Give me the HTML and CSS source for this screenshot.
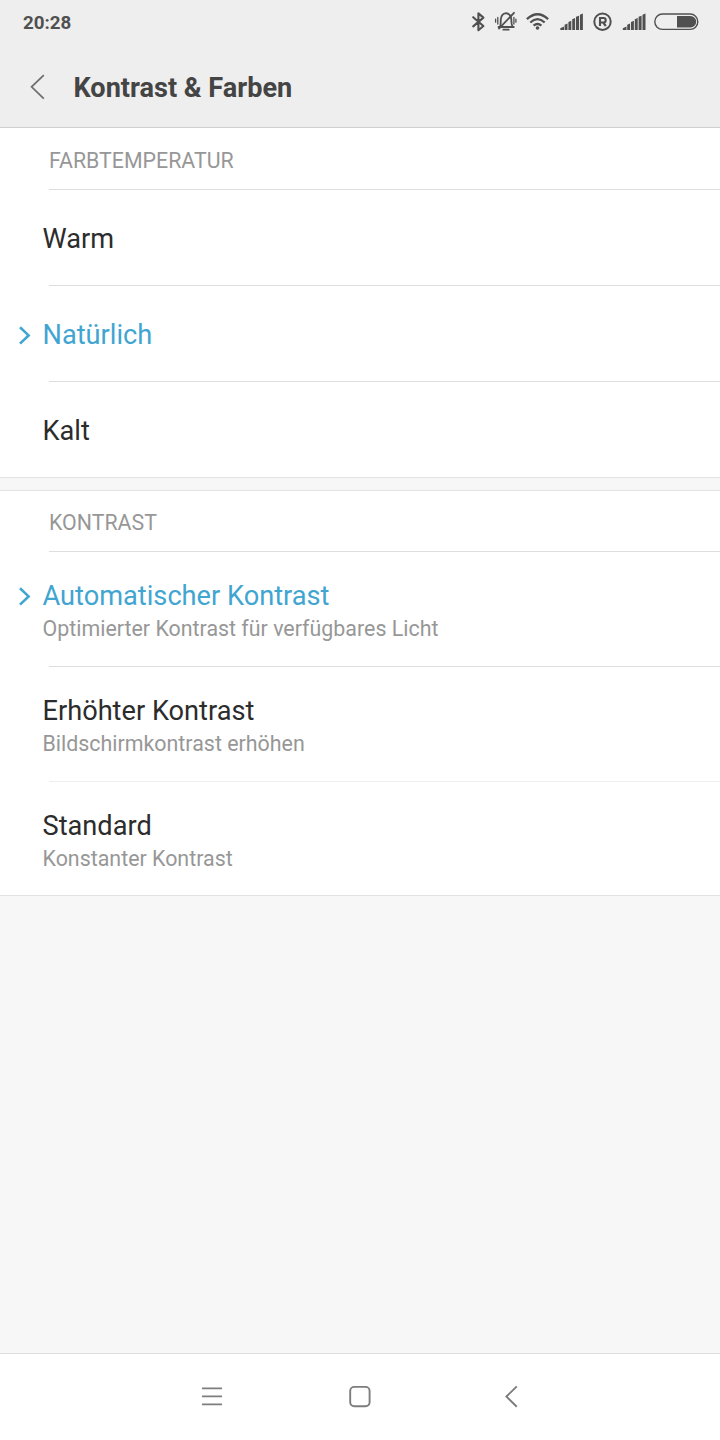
FILE: index.html
```html
<!DOCTYPE html>
<html lang="de">
<head>
<meta charset="utf-8">
<title>Kontrast &amp; Farben</title>
<link rel="stylesheet" href="styles.css">
</head>
<body>
<div class="screen">
  <header class="header">
    <div class="status">
      <span class="clock">20:28</span>
      <svg class="status-icons" width="230" height="28" viewBox="470 8 230 28" fill="none" stroke="#505050" stroke-linecap="round" stroke-linejoin="round">
        <path stroke-width="2.1" d="M473.2 17.2 483.4 26 478.4 30.2V13.4L483.4 17.6 473.2 26.4"/>
        <g stroke-width="1.8">
          <path d="M498.5 27H513.8M500.2 26.4C501 24.2 500.6 22.6 500.8 19.2 501.2 15.8 503 13.6 506 13.2 509.2 13.6 511 15.8 511.3 19.2 511.4 22.6 511.3 24.4 512.4 26.4"/>
          <path d="M503.3 29.7H508.7M514 12.8 499 28.6"/>
          <path stroke-width="1.3" d="M497.8 17.4V24M495.6 19.2V22.2M513.9 17.4V24M515.9 19.2V22.2"/>
        </g>
        <g stroke-width="2.3" stroke-linecap="butt">
          <path d="M526.9 19.2Q537.5 9.2 548.1 19.2M530.3 22.5Q537.5 15.8 544.7 22.5M533.6 25.7Q537.5 22.3 541.4 25.7"/>
        </g>
        <circle cx="537.5" cy="28" r="1.8" fill="#505050" stroke="none"/>
        <path fill="#505050" stroke="none" d="M560.3 30V28.2L564 26.6V30ZM564.6 30V24.7L567.5 23.5V30ZM568.4 30V22L571.3 20.8V30ZM572.2 30V19.3L575.1 18.1V30ZM576 30V16.8L579 15.7V30ZM579.9 30V14.7L582.9 13.6V30Z"/>
        <circle cx="602.5" cy="21.7" r="8.2" stroke-width="2"/>
        <path stroke-width="2.1" stroke-linecap="butt" stroke-linejoin="miter" d="M600 26V18H603.4C606.5 18 606.5 22.5 603.4 22.5H600M603.2 22.5 605.8 26"/>
        <path fill="#505050" stroke="none" d="M622.8 30V28.2L626.5 26.6V30ZM627.2 30V24.7L630.1 23.5V30ZM631 30V22L633.9 20.8V30ZM634.8 30V19.3L637.7 18.1V30ZM638.6 30V16.8L641.6 15.7V30ZM642.5 30V14.7L645.5 13.6V30Z"/>
        <rect x="654.8" y="14" width="43" height="15.4" rx="7.7" stroke-width="1.4"/>
        <path fill="#505050" stroke="none" d="M677 16H690.5A5.7 5.7 0 0 1 690.5 27.4H677Z"/>
      </svg>
    </div>
    <div class="titlebar">
      <svg class="back" width="18" height="28" viewBox="0 0 18 28" fill="none" stroke="#707070" stroke-width="1.8"><path d="M15.8 2.1 3.6 13.8 15.8 25.6"/></svg>
      <h1 class="title">Kontrast &amp; Farben</h1>
    </div>
  </header>
  <main class="content">
    <section class="group">
      <h2 class="group-title">FARBTEMPERATUR</h2>
      <div class="row"><span class="label">Warm</span></div>
      <div class="row selected">
        <svg class="marker" width="14" height="20" viewBox="0 0 14 20"><path d="M2 2.2 10.6 10.4 2 18.6"/></svg>
        <span class="label">Natürlich</span>
      </div>
      <div class="row"><span class="label">Kalt</span></div>
    </section>
    <section class="group contrast">
      <h2 class="group-title">KONTRAST</h2>
      <div class="row tall selected">
        <svg class="marker" width="14" height="20" viewBox="0 0 14 20"><path d="M2 2.2 10.6 10.4 2 18.6"/></svg>
        <span class="label">Automatischer Kontrast</span>
        <span class="summary">Optimierter Kontrast für verfügbares Licht</span>
      </div>
      <div class="row tall">
        <span class="label">Erhöhter Kontrast</span>
        <span class="summary">Bildschirmkontrast erhöhen</span>
      </div>
      <div class="row tall last">
        <span class="label">Standard</span>
        <span class="summary">Konstanter Kontrast</span>
      </div>
    </section>
  </main>
  <nav class="navbar">
    <svg width="24" height="24" viewBox="0 0 24 24"><path d="M2 4.4H22M2 12.4H22M2 20.4H22"/></svg>
    <svg width="24" height="24" viewBox="0 0 24 24"><rect x="2.2" y="2.9" width="19.4" height="19.4" rx="4"/></svg>
    <svg width="24" height="24" viewBox="0 0 24 24"><path d="M20.8 2.4 10.4 12.6 20.8 22.8"/></svg>
  </nav>
</div>
</body>
</html>
```
FILE: styles.css
```css
* { box-sizing: border-box; }
body { margin: 0; font-family: Roboto, "Liberation Sans", sans-serif; }
.screen { display: flex; flex-direction: column; width: 720px; height: 1440px; background: #f7f7f7; }
.header { height: 128px; background: #eeeeee; border-bottom: 1px solid #cfcfcf; }
.status { display: flex; justify-content: space-between; height: 44px; padding: 8px 20px 0 23px; }
.clock { font-size: 18.8px; line-height: 31px; font-weight: 700; color: #505050; }
.titlebar { display: flex; align-items: center; height: 86px; padding-left: 28px; }
.title { margin: 0 0 0 27.5px; padding-top: 2px; font-size: 27.1px; line-height: 37px; font-weight: 700; color: #444444; }
.content { flex: 1; }
.group { background: #ffffff; border-bottom: 1px solid #e2e2e2; }
.contrast { margin-top: 12px; border-top: 1px solid #e2e2e2; }
.group-title { height: 62px; margin: 0 0 0 49px; padding-top: 3px; border-bottom: 1px solid #dedede; font-size: 21.35px; line-height: 60px; font-weight: 400; color: #979797; }
.contrast .group-title { height: 61px; padding-top: 2px; }
.row { position: relative; display: flex; flex-direction: column; height: 96px; padding: 32px 0 0 42.5px; }
.row:not(:last-child)::after { content: ""; position: absolute; left: 49px; right: 0; bottom: 0; height: 1px; background: #dedede; }
.row:last-child { height: 95px; }
.row.tall { height: 115px; padding-top: 27px; }
.row.tall.last { height: 113px; }
.row.tall:nth-last-child(2)::after { background: #eeeeee; }
.label { font-size: 27.2px; line-height: 34px; color: #2c2c2c; }
.summary { font-size: 21.4px; line-height: 32px; color: #979797; }
.tall:not(.selected) .summary { line-height: 31px; }
.selected .label { color: #41a5d1; }
.marker { position: absolute; left: 18px; top: 39px; fill: none; stroke: #41a5d1; stroke-width: 2.6; }
.tall .marker { top: 34px; }
.navbar { display: flex; justify-content: center; gap: 124px; height: 87px; padding-top: 30px; background: #ffffff; border-top: 1px solid #dedede; }
.navbar svg { fill: none; stroke: #7d7d7d; stroke-width: 1.9; }
```
